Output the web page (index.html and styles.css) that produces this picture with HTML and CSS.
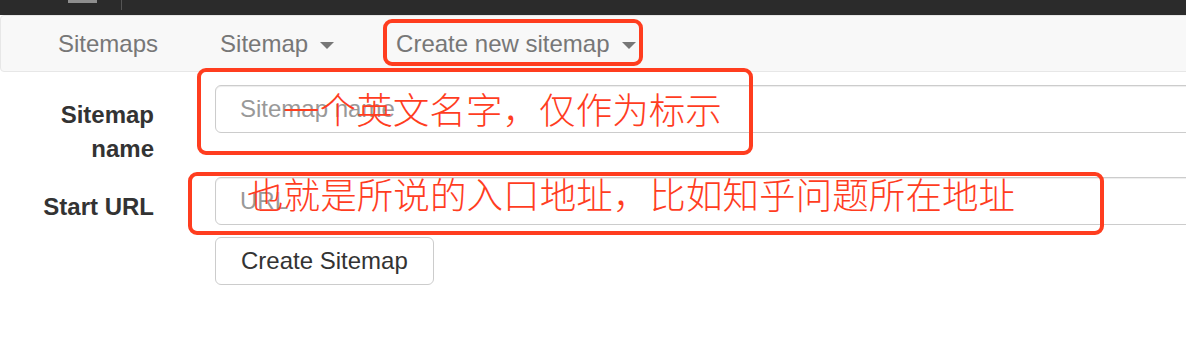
FILE: index.html
```html
<!DOCTYPE html>
<html lang="en">
<head>
    <meta charset="UTF-8">
    <meta name="viewport" content="width=device-width, initial-scale=1.0">
    <title>Create Sitemap</title>
    <link rel="stylesheet" href="styles.css">
</head>
<body>
    <div class="topbar">
        <span class="topbar-btn"></span>
        <span class="topbar-sep"></span>
    </div>

    <nav class="navbar">
        <a class="nav-link" href="#">Sitemaps</a>
        <a class="nav-link" href="#">Sitemap<span class="caret"></span></a>
        <a class="nav-link" href="#">Create new sitemap<span class="caret"></span></a>
    </nav>

    <form class="sitemap-form">
        <label class="form-label" for="sitemapName">Sitemap name</label>
        <input class="form-input" type="text" id="sitemapName" placeholder="Sitemap name">

        <label class="form-label" for="startUrl">Start URL</label>
        <input class="form-input" type="text" id="startUrl" placeholder="URL">

        <div></div>
        <div class="form-actions">
            <button type="button" class="btn">Create Sitemap</button>
        </div>
    </form>

    <!-- annotations drawn over the screenshot -->
    <div class="mark mark-nav"></div>
    <div class="mark mark-name"></div>
    <div class="mark mark-url"></div>
    <div class="note note-name">一个英文名字，仅作为标示</div>
    <div class="note note-url">也就是所说的入口地址，比如知乎问题所在地址</div>
</body>
</html>
```

FILE: styles.css
```css
html, body {
    margin: 0;
    overflow: hidden;
}
body {
    position: relative;
    font-family: "Liberation Sans", Arial, sans-serif;
    background-color: #fff;
    color: #333;
}
.topbar {
    height: 15px;
    background-color: #2b2b2b;
    display: flex;
    align-items: flex-start;
    padding-left: 68px;
}
.topbar-btn {
    width: 29px;
    height: 3px;
    background-color: #8e8e8e;
}
.topbar-sep {
    width: 1px;
    height: 10px;
    margin-left: 24px;
    background-color: #555;
}
.navbar {
    display: flex;
    align-items: center;
    height: 55px;
    margin-right: -10px;
    padding-left: 26px;
    background-color: #f8f8f8;
    border: 1px solid #e7e7e7;
    border-radius: 4px;
}
.nav-link {
    padding: 0 31px;
    font-size: 24px;
    color: #777;
    text-decoration: none;
    white-space: nowrap;
}
.caret {
    display: inline-block;
    vertical-align: middle;
    margin-left: 12px;
    width: 0;
    height: 0;
    border-top: 7px solid #777;
    border-left: 7px solid transparent;
    border-right: 7px solid transparent;
}
.sitemap-form {
    display: grid;
    grid-template-columns: 124px 1100px;
    column-gap: 61px;
    row-gap: 11px;
    margin-top: 13px;
    padding-left: 30px;
}
.form-label {
    padding-top: 13px;
    font-size: 24px;
    font-weight: bold;
    line-height: 34px;
    text-align: right;
    color: #333;
}
.form-input {
    box-sizing: border-box;
    height: 48px;
    padding: 0 24px;
    font-family: inherit;
    font-size: 24px;
    color: #555;
    border: 1px solid #ccc;
    border-radius: 6px;
    box-shadow: inset 0 1px 1px rgba(0, 0, 0, 0.075);
    outline: none;
}
.form-input::placeholder {
    color: #999;
}
.form-actions {
    padding-top: 1px;
}
.btn {
    box-sizing: border-box;
    height: 48px;
    padding: 0 25px;
    font-family: inherit;
    font-size: 24px;
    color: #333;
    background-color: #fff;
    border: 1px solid #ccc;
    border-radius: 6px;
    cursor: pointer;
}
.mark {
    position: absolute;
    box-sizing: border-box;
    border: 4px solid #ff3d1f;
    border-radius: 9px;
}
.mark-nav {
    left: 383px;
    top: 19px;
    width: 260px;
    height: 47px;
}
.mark-name {
    left: 197px;
    top: 68px;
    width: 556px;
    height: 87px;
}
.mark-url {
    left: 188px;
    top: 172px;
    width: 916px;
    height: 63px;
}
.note {
    position: absolute;
    font-family: "Noto Sans CJK SC", sans-serif;
    font-size: 36.6px;
    font-weight: 300;
    line-height: 36px;
    color: #ff3d1f;
    white-space: nowrap;
}
.note-name {
    left: 283px;
    top: 91px;
}
.note-url {
    left: 247px;
    top: 176px;
}
```
